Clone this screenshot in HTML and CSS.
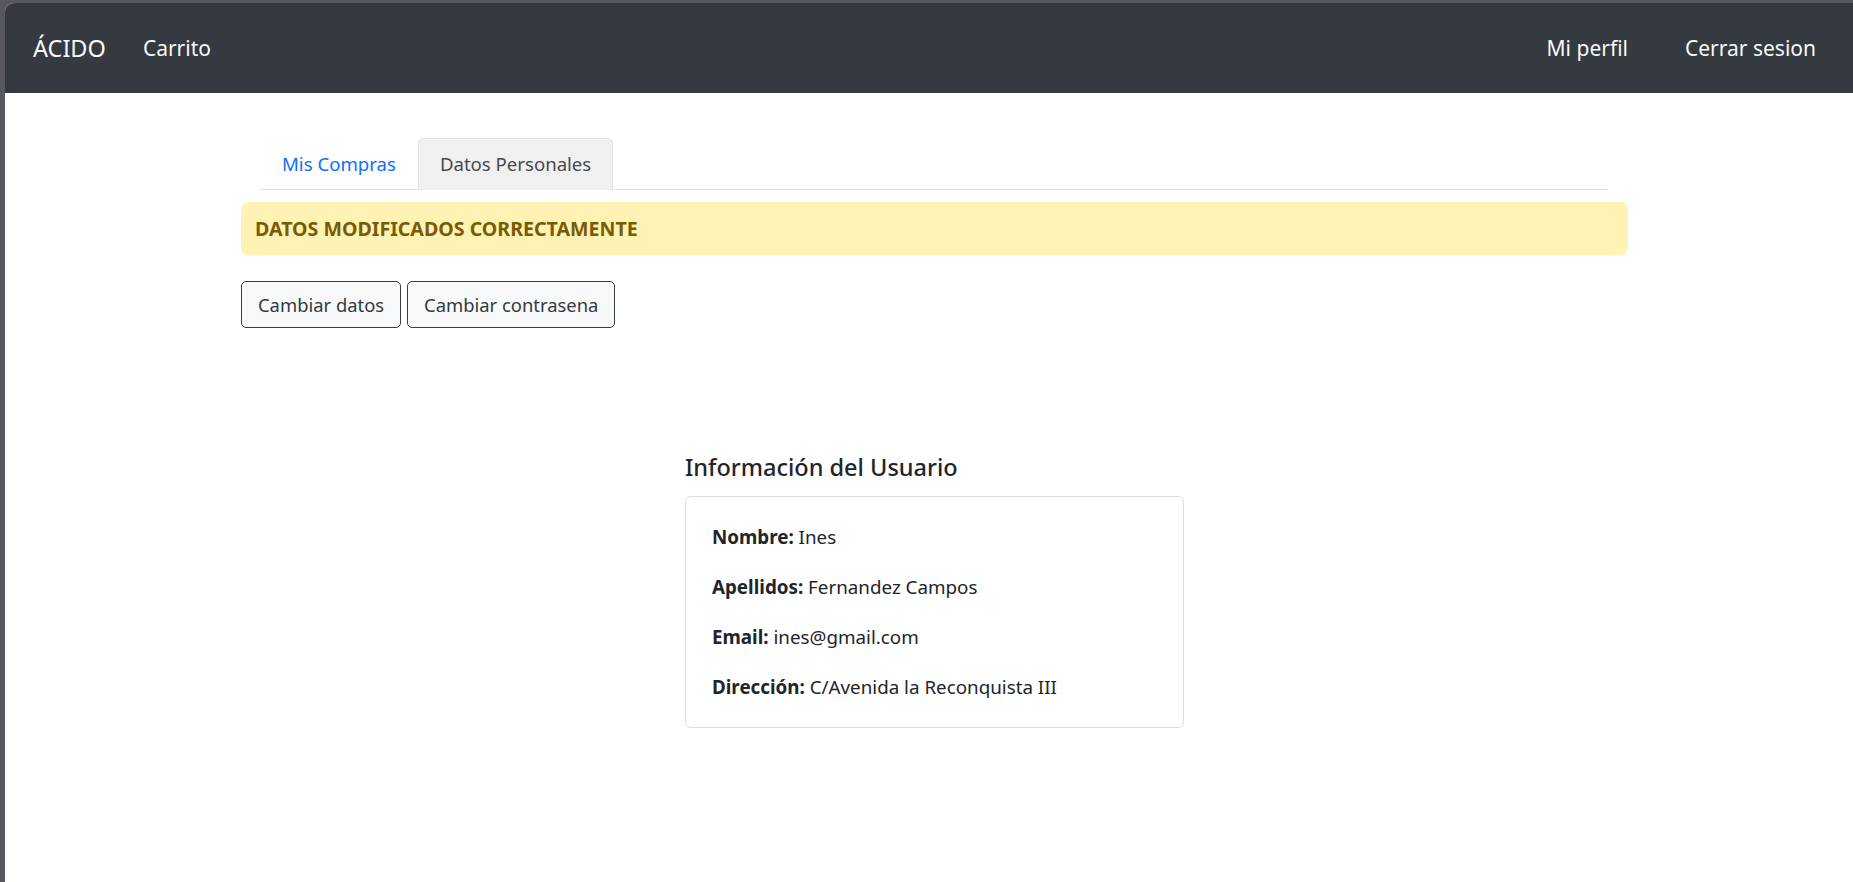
FILE: index.html
```html
<!DOCTYPE html>
<html lang="es">
<head>
<meta charset="utf-8">
<title>Mi perfil</title>
<link rel="stylesheet" href="styles.css">
</head>
<body>
<div class="window">
  <nav class="navbar">
    <div class="nav-left">
      <a class="brand" href="#">ÁCIDO</a>
      <a class="nav-link" href="#">Carrito</a>
    </div>
    <div class="nav-right">
      <a class="nav-link" href="#">Mi perfil</a>
      <a class="nav-link" href="#">Cerrar sesion</a>
    </div>
  </nav>
  <main class="page">
    <div class="container">
      <ul class="tabs">
        <li><a class="tab" href="#">Mis Compras</a></li>
        <li><a class="tab active" href="#">Datos Personales</a></li>
      </ul>
      <div class="alert">DATOS MODIFICADOS CORRECTAMENTE</div>
      <div class="actions">
        <button class="btn">Cambiar datos</button>
        <button class="btn">Cambiar contrasena</button>
      </div>
      <section class="user-info">
        <h5 class="info-title">Información del Usuario</h5>
        <div class="card">
          <p><strong>Nombre:</strong> Ines</p>
          <p><strong>Apellidos:</strong> Fernandez Campos</p>
          <p><strong>Email:</strong> ines@gmail.com</p>
          <p><strong>Dirección:</strong> C/Avenida la Reconquista III</p>
        </div>
      </section>
    </div>
  </main>
</div>
</body>
</html>
```

FILE: styles.css
```css
html, body {
  margin: 0;
  padding: 0;
  height: 100%;
}
body {
  background: #56585e;
  font-family: "Noto Sans", "Open Sans", sans-serif;
  color: #212529;
  overflow: hidden;
}
.window {
  margin: 3px 0 0 5px;
  height: calc(100% - 3px);
  background: #ffffff;
  border-top-left-radius: 9px;
  overflow: hidden;
}
.navbar {
  height: 90px;
  background: #343a40;
  display: flex;
  align-items: center;
  justify-content: space-between;
  padding: 0 37px 0 28px;
}
.nav-left, .nav-right {
  display: flex;
  align-items: center;
}
.nav-left { gap: 37px; }
.nav-right { gap: 57px; }
.brand, .nav-link {
  color: #f8f9fa;
  text-decoration: none;
  font-size: 21px;
  line-height: 33px;
}
.brand {
  font-size: 23.5px;
}
.page {
  padding-top: 45px;
}
.container {
  width: 1387px;
  margin-left: 236px;
}
.tabs {
  list-style: none;
  margin: 0 20px 0 19px;
  padding: 0;
  display: flex;
  border-bottom: 1px solid #dee2e6;
}
.tab {
  display: block;
  padding: 9px 21px;
  font-size: 18.6px;
  line-height: 32px;
  color: #0d6efd;
  text-decoration: none;
  border: 1px solid transparent;
  border-top-left-radius: 6px;
  border-top-right-radius: 6px;
  margin-bottom: -1px;
}
.tab.active {
  color: #444a50;
  background: #f0f0f0;
  border-color: #dee2e6 #dee2e6 #f0f0f0;
}
.alert {
  margin-top: 12px;
  background: #fef3b4;
  color: #7a5a03;
  font-weight: 700;
  font-size: 19.6px;
  line-height: 33px;
  padding: 10px 14px;
  border-radius: 7px;
}
.actions {
  margin-top: 26px;
  display: flex;
  gap: 6px;
}
.btn {
  font-family: inherit;
  font-size: 18.4px;
  line-height: 31px;
  padding: 7px 16px;
  color: #333a40;
  background: #f8f9fa;
  border: 1px solid #3a3f45;
  border-radius: 5px;
}
.user-info {
  width: 499px;
  margin: 124px auto 0;
}
.info-title {
  margin: 0 0 14px;
  font-size: 23.5px;
  font-weight: 500;
  line-height: 30px;
}
.card {
  border: 1px solid #dcdfe2;
  border-radius: 6px;
  padding: 25px 26px;
}
.card p {
  margin: 0 0 20px;
  font-size: 18.8px;
  line-height: 30px;
}
.card p:last-child {
  margin-bottom: 0;
}
.card strong {
  font-weight: 700;
}
```
